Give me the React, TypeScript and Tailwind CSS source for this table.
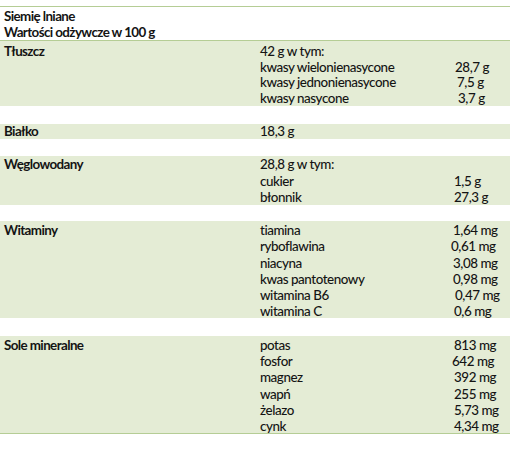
import React from 'react';

type Item = { name: string; value: string; shift?: string };
type Section = {
  label: string;
  head?: string;
  items: Item[];
  box: string;
  lh: string;
};

// dane z tabeli
const sections: Section[] = [
  {
    label: 'Tłuszcz',
    head: '42 g w tym:',
    items: [
      { name: 'kwasy wielonienasycone', value: '28,7 g', shift: 'pl-[1px]' },
      { name: 'kwasy jednonienasycone', value: '7,5 g', shift: 'pl-[3px]' },
      { name: 'kwasy nasycone', value: '3,7 g', shift: 'pl-[4px]' },
    ],
    box: 'h-[65px] pt-[3px]',
    lh: 'leading-[15.7px]',
  },
  { label: 'Białko', head: '18,3 g', items: [], box: 'h-[15px] mt-[18px] pt-0', lh: 'leading-[15px]' },
  {
    label: 'Węglowodany',
    head: '28,8 g w tym:',
    items: [
      { name: 'cukier', value: '1,5 g' },
      { name: 'błonnik', value: '27,3 g' },
    ],
    box: 'h-[49px] mt-[17px]',
    lh: 'leading-[16.5px]',
  },
  {
    label: 'Witaminy',
    items: [
      { name: 'tiamina', value: '1,64 mg', shift: '-ml-[1px]' },
      { name: 'ryboflawina', value: '0,61 mg', shift: '-ml-[3px]' },
      { name: 'niacyna', value: '3,08 mg', shift: '-ml-[1px]' },
      { name: 'kwas pantotenowy', value: '0,98 mg', shift: '-ml-[1px]' },
      { name: 'witamina B6', value: '0,47 mg', shift: 'pl-[1px]' },
      { name: 'witamina C', value: '0,6 mg' },
    ],
    box: 'h-[97px] mt-[16px] pt-[1px]',
    lh: 'leading-[16.3px]',
  },
  {
    label: 'Sole mineralne',
    items: [
      { name: 'potas', value: '813 mg' },
      { name: 'fosfor', value: '642 mg', shift: '-ml-[2px]' },
      { name: 'magnez', value: '392 mg' },
      { name: 'wapń', value: '255 mg' },
      { name: 'żelazo', value: '5,73 mg' },
      { name: 'cynk', value: '4,34 mg' },
    ],
    box: 'h-[97px] mt-[18px] pt-[1px]',
    lh: 'leading-[16.2px]',
  },
];

const App = () => {
  return (
    <div className="w-[512px] h-[449px] bg-white text-[#141414] font-['Lato','Liberation_Sans',sans-serif] font-medium text-[13.4px] tracking-[-0.45px]">
      <div className="pt-[6px] w-[510px]">
        <div className="border-t border-[#b5cd95]" />
        <div className="h-[33px] px-[4px] pt-[1px] font-bold tracking-[-0.6px] leading-[16px]">
          <div>Siemię lniane</div>
          <div>Wartości odżywcze w 100 g</div>
        </div>
        <div className="border-t border-[#b5cd95]" />

        {sections.map((s) => (
          <div key={s.label} className={`flex overflow-hidden bg-[#e4ecd5] ${s.box} ${s.lh}`}>
            <div className="w-[256px] pl-[4px] font-bold tracking-[-0.6px]">{s.label}</div>
            <div className="flex-1 pl-[4px]">
              {s.head && <div>{s.head}</div>}
              {s.items.map((it) => (
                <div key={it.name} className="flex">
                  <div className="w-[194px] shrink-0">{it.name}</div>
                  <div className={it.shift ?? ''}>{it.value}</div>
                </div>
              ))}
            </div>
          </div>
        ))}
        <div className="border-t border-[#b5cd95]" />
      </div>
    </div>
  );
};

export default App;
